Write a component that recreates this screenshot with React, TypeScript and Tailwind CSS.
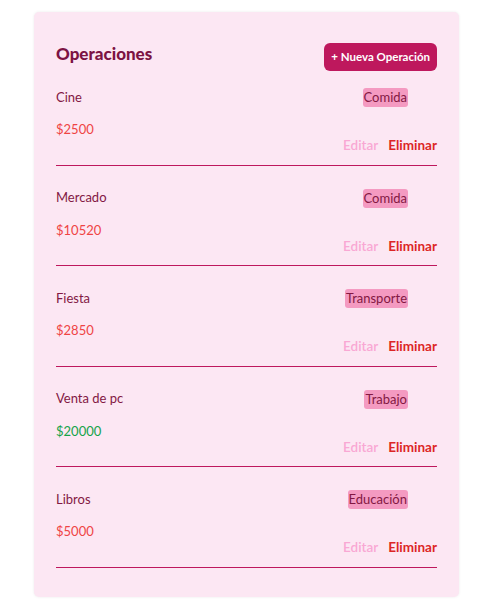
import React from 'react';

interface Operacion {
  id: number;
  descripcion: string;
  monto: number;
  tipo: 'gasto' | 'ganancia';
  categoria: string;
}

const operaciones: Operacion[] = [
  { id: 1, descripcion: 'Cine', monto: 2500, tipo: 'gasto', categoria: 'Comida' },
  { id: 2, descripcion: 'Mercado', monto: 10520, tipo: 'gasto', categoria: 'Comida' },
  { id: 3, descripcion: 'Fiesta', monto: 2850, tipo: 'gasto', categoria: 'Transporte' },
  { id: 4, descripcion: 'Venta de pc', monto: 20000, tipo: 'ganancia', categoria: 'Trabajo' },
  { id: 5, descripcion: 'Libros', monto: 5000, tipo: 'gasto', categoria: 'Educación' },
];

export default function App() {
  return (
    <div className="min-h-screen bg-white pt-[12px] font-['Lato','Liberation_Sans',sans-serif]">
      <div className="ml-[34px] w-[425px] rounded-[5px] bg-[#fce7f3] px-[22px] pt-[31px] pb-[29px] shadow-[0_0_3px_rgba(0,0,0,0.08)]">
        {/* Header */}
        <div className="flex items-start justify-between">
          <h2 className="text-[17px] leading-[22px] font-black text-[#7c1343]">Operaciones</h2>
          <button className="h-[28px] rounded-[6px] bg-[#be185d] px-[7px] text-[11.5px] font-bold text-white">
            + Nueva Operación
          </button>
        </div>

        {/* Lista */}
        <div>
          {operaciones.map((op, i) => (
            <div
              key={op.id}
              className={
                i === 0
                  ? 'border-b border-[#be185d] pt-[17px] pb-[9.5px]'
                  : 'border-b border-[#be185d] pt-[23px] pb-[9.5px]'
              }
            >
              <div className="flex h-[19px] items-center justify-between">
                <span className="text-[13px] text-[#831843]">{op.descripcion}</span>
                <span className="mr-[29px] rounded-[3px] bg-[#f49ac1] px-[1px] text-[13px] leading-[19px] text-[#831843]">
                  {op.categoria}
                </span>
              </div>
              <div className="mt-[13px] flex items-end justify-between">
                <span
                  className={
                    op.tipo === 'ganancia'
                      ? 'mb-[16px] text-[13px] leading-[19px] text-[#16a34a]'
                      : 'mb-[16px] text-[13px] leading-[19px] text-[#ef4444]'
                  }
                >
                  ${op.monto}
                </span>
                <div className="flex gap-[10px] text-[13.5px] leading-[19px]">
                  <button className="font-semibold text-[#f9a8d4]">Editar</button>
                  <button className="font-bold text-[#dc2626]">Eliminar</button>
                </div>
              </div>
            </div>
          ))}
        </div>
      </div>
    </div>
  );
}
